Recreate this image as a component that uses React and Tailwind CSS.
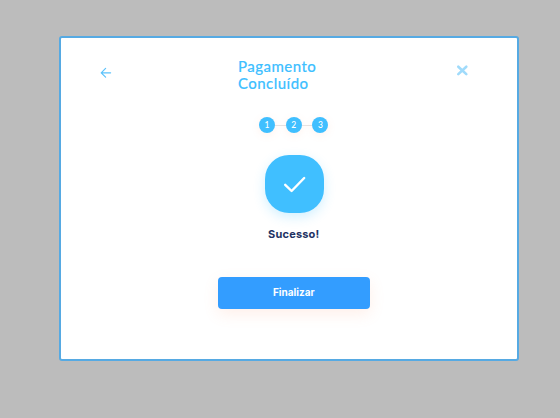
import { Fragment } from "react";

function Steps() {
  return (
    <div className="mt-[26px] flex h-4 items-center justify-center pl-[9.5px]">
      {[1, 2, 3].map((n) => (
        <Fragment key={n}>
          {n > 1 && <span className="h-px w-[10.7px] bg-[#e6e3e3]" />}
          <span className="flex size-4 items-center justify-center rounded-full bg-[#40bfff] font-['Lato',sans-serif] text-[8.5px] leading-none font-medium text-white shadow-[0_2px_8px_rgba(255,150,110,0.12)]">
            {n}
          </span>
        </Fragment>
      ))}
    </div>
  );
}

export default function App() {
  return (
    <main className="h-[418px] w-[560px] overflow-hidden bg-[#bcbcbc] pt-[36px] pl-[59px]">
      <section className="flex h-[325px] w-[460px] flex-col rounded-[3px] border-2 border-[#56aae3] bg-white">
        <header className="flex h-[53px] items-start pt-[20px] pr-[48px] pl-[39px]">
          <button aria-label="Voltar" className="mt-[9px]">
            <svg width="12" height="12" viewBox="0 0 12 12" fill="none" stroke="#5bc2fb" strokeWidth="1.2" strokeLinecap="round" strokeLinejoin="round">
              <path d="M10.6 5.8H1.4M5.6 1.4L1.2 5.8L5.6 10.2" />
            </svg>
          </button>
          <h1 className="ml-[126px] w-[82px] font-['Lato',sans-serif] text-[15px] leading-[17px] font-medium tracking-[0.45px] text-[#40bfff] [-webkit-text-stroke:0.15px_#40bfff]">
            Pagamento Concluído
          </h1>
          <button aria-label="Fechar" className="mt-[6px] ml-auto">
            <svg width="13" height="13" viewBox="0 0 13 13" fill="none" stroke="#a0dbfb" strokeWidth="2.6" strokeLinecap="round">
              <path d="M2.3 2.7L10.3 10.1M10.3 2.7L2.3 10.1" />
            </svg>
          </button>
        </header>
        <Steps />
        <div className="mt-[22px] ml-[204px] flex h-[58px] w-[58.5px] items-center justify-center rounded-[24px] bg-[#40bfff] shadow-[0_4px_12px_rgba(64,191,255,0.24)]">
          <svg width="24" height="18" viewBox="0 0 24 18" fill="none" stroke="white" strokeWidth="2.4" strokeLinecap="round" strokeLinejoin="round">
            <path d="M3.2 9.8L9.6 16L22.2 3" />
          </svg>
        </div>
        <h2 className="mt-[12px] pl-[9.5px] text-center font-['Inter',sans-serif] text-[11px] leading-[18px] font-bold tracking-[0.2px] text-[#223263]">
          Sucesso!
        </h2>
        <button className="mt-[34px] ml-[157px] h-[31.5px] w-[151.5px] shrink-0 rounded-[4px] bg-[#339dff] font-['Inter',sans-serif] text-[10px] font-bold text-white shadow-[0_5px_15px_rgba(255,140,100,0.14)]">
          Finalizar
        </button>
      </section>
    </main>
  );
}
